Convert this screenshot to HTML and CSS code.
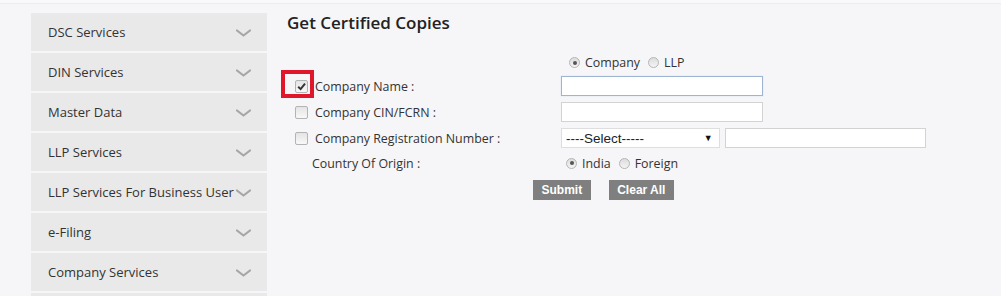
FILE: index.html
```html
<!DOCTYPE html>
<html>
<head>
<meta charset="utf-8">
<link rel="stylesheet" href="styles.css">
</head>
<body>
<div class="topline"></div>
<div class="page">
  <nav class="sidebar">
    <div class="item"><span>DSC Services</span><svg class="chev" viewBox="0 0 15 8"><path d="M1 1.5 L7.5 6.5 L14 1.5"/></svg></div>
    <div class="item"><span>DIN Services</span><svg class="chev" viewBox="0 0 15 8"><path d="M1 1.5 L7.5 6.5 L14 1.5"/></svg></div>
    <div class="item"><span>Master Data</span><svg class="chev" viewBox="0 0 15 8"><path d="M1 1.5 L7.5 6.5 L14 1.5"/></svg></div>
    <div class="item"><span>LLP Services</span><svg class="chev" viewBox="0 0 15 8"><path d="M1 1.5 L7.5 6.5 L14 1.5"/></svg></div>
    <div class="item"><span>LLP Services For Business User</span><svg class="chev" viewBox="0 0 15 8"><path d="M1 1.5 L7.5 6.5 L14 1.5"/></svg></div>
    <div class="item"><span>e-Filing</span><svg class="chev" viewBox="0 0 15 8"><path d="M1 1.5 L7.5 6.5 L14 1.5"/></svg></div>
    <div class="item"><span>Company Services</span><svg class="chev" viewBox="0 0 15 8"><path d="M1 1.5 L7.5 6.5 L14 1.5"/></svg></div>
    <div class="item"><span></span></div>
  </nav>
  <main class="content">
    <h1 class="title">Get Certified Copies</h1>
    <div class="form">
      <div class="label"></div>
      <div class="field radios type">
        <span class="radio on"></span><span class="rtext">Company</span>
        <span class="radio"></span><span class="rtext">LLP</span>
      </div>

      <div class="label">
        <span class="cbwrap"><span class="cb checked"><svg viewBox="0 0 10 10"><path d="M2 5.2 L4.2 7.4 L8.2 2.4"/></svg></span><span class="mark"></span></span>
        <span>Company Name :</span>
      </div>
      <div class="field"><span class="input focus"></span></div>

      <div class="label">
        <span class="cbwrap"><span class="cb"></span></span>
        <span>Company CIN/FCRN :</span>
      </div>
      <div class="field"><span class="input"></span></div>

      <div class="label">
        <span class="cbwrap"><span class="cb"></span></span>
        <span>Company Registration Number :</span>
      </div>
      <div class="field">
        <span class="select"><span>----Select-----</span><span class="arrow">&#9660;</span></span>
        <span class="input"></span>
      </div>

      <div class="label plain"><span>Country Of Origin :</span></div>
      <div class="field radios country">
        <span class="radio on"></span><span class="rtext">India</span>
        <span class="radio"></span><span class="rtext">Foreign</span>
      </div>

      <div class="buttons">
        <span class="btn">Submit</span>
        <span class="btn">Clear All</span>
      </div>
    </div>
  </main>
</div>
</body>
</html>
```
FILE: styles.css
```css
html, body {
  margin: 0;
  padding: 0;
}
body {
  background: #f6f6f8;
  font-family: "Open Sans", "Noto Sans", sans-serif;
  color: #333;
  width: 1001px;
  height: 296px;
  overflow: hidden;
}
.topline {
  height: 3px;
  background: #f9f9fb;
  border-bottom: 1px solid #ececf0;
}
.page {
  display: flex;
  gap: 14px;
  padding: 9px 0 0 31px;
  height: 283px;
  overflow: hidden;
}
.sidebar {
  width: 236px;
  display: flex;
  flex-direction: column;
  gap: 2px;
  flex-shrink: 0;
}
.item {
  height: 38px;
  flex-shrink: 0;
  background: #e9e9ea;
  display: flex;
  align-items: center;
  justify-content: space-between;
  padding: 0 16px 0 17px;
  font-size: 13px;
  color: #333;
  white-space: nowrap;
}
.chev {
  width: 15px;
  height: 8px;
  flex-shrink: 0;
  margin-top: 1px;
}
.chev path {
  fill: none;
  stroke: #a6a6a6;
  stroke-width: 2.2;
  stroke-linecap: round;
  stroke-linejoin: round;
}
.content {
  width: 645px;
}
.title {
  margin: 0;
  padding-left: 6px;
  font-size: 17px;
  font-weight: 600;
  line-height: 20px;
  color: #222;
}
.form {
  display: grid;
  grid-template-columns: 280px 365px;
  grid-template-rows: 22px 26px 26px 26px 24px;
  margin-top: 18px;
  font-size: 12.4px;
  color: #333;
}
.label {
  display: flex;
  align-items: center;
  gap: 7px;
  padding-left: 14px;
}
.label.plain {
  padding-left: 31px;
}
.cbwrap {
  position: relative;
  display: flex;
}
.cb {
  width: 11px;
  height: 11px;
  border: 1px solid #b3b3b3;
  border-radius: 2px;
  background: linear-gradient(#e4e4e4, #f8f8f8);
  display: flex;
}
.cb svg {
  width: 11px;
  height: 11px;
}
.cb path {
  fill: none;
  stroke: #333;
  stroke-width: 1.8;
}
.mark {
  position: absolute;
  left: -14px;
  top: -10px;
  width: 25px;
  height: 20px;
  border: 4px solid #e0172b;
}
.field {
  display: flex;
  align-items: center;
  gap: 5px;
}
.input {
  width: 200px;
  height: 18px;
  background: #fff;
  border: 1px solid #d3d3d3;
  box-sizing: content-box;
}
.input.focus {
  border-color: #9db4d3;
  box-shadow: 0 0 1px #c5d5ea;
}
.select {
  width: 150px;
  height: 18px;
  background: #fff;
  border: 1px solid #dedede;
  display: flex;
  align-items: center;
  justify-content: space-between;
  padding: 0 3px 0 4px;
  font-family: "Liberation Sans", Arial, sans-serif;
  font-size: 13.5px;
  color: #222;
}
.arrow {
  font-size: 9px;
  color: #111;
  margin-right: 3px;
}
.radios {
  gap: 0;
}
.radio {
  width: 9px;
  height: 9px;
  border-radius: 50%;
  border: 1px solid #b5b5b5;
  background: linear-gradient(#dcdcdc, #f4f4f4);
  box-sizing: content-box;
  position: relative;
  margin-right: 5px;
}
.radio.on::after {
  content: "";
  position: absolute;
  left: 2.5px;
  top: 2.5px;
  width: 4px;
  height: 4px;
  border-radius: 50%;
  background: #555;
}
.rtext {
  margin-right: 8px;
}
.type {
  padding-left: 8px;
  align-items: flex-start;
  padding-top: 3px;
}
.type .radio {
  margin-top: 3px;
}
.country {
  padding-left: 5px;
}
.buttons {
  grid-column: 1 / 3;
  display: flex;
  justify-content: center;
  gap: 18px;
  margin-top: 5px;
}
.btn {
  height: 20px;
  line-height: 20px;
  background: #7f7f7f;
  color: #fff;
  font-family: "Liberation Sans", Arial, sans-serif;
  font-weight: bold;
  font-size: 12px;
  padding: 0 8.5px;
}
```
